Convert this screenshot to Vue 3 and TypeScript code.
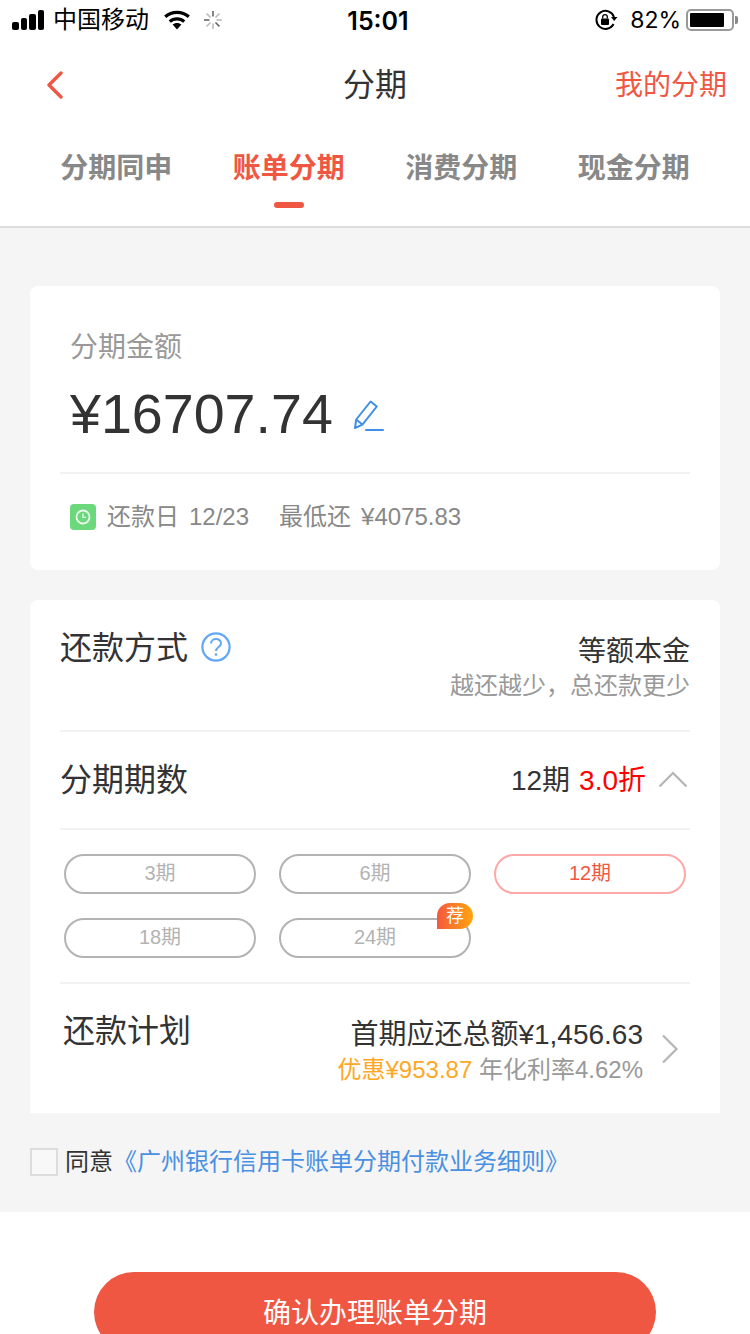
<template>
  <div class="page">
    <div class="status">
      <div class="status__left">
        <div class="signal">
          <i v-for="h in signalBars" :key="h" :style="{ height: h + 'px' }"></i>
        </div>
        <span class="carrier">中国移动</span>
        <svg class="wifi" width="28" height="20" viewBox="0 0 28 20">
          <path d="M14 19.5 L9.6 14.6 C12 12.4 16 12.4 18.4 14.6 Z" fill="#000" />
          <path d="M6.8 11.6 C10.8 7.9 17.2 7.9 21.2 11.6" fill="none" stroke="#000" stroke-width="3.2" />
          <path d="M2.2 6.8 C8.8 .9 19.2 .9 25.8 6.8" fill="none" stroke="#000" stroke-width="3.2" />
        </svg>
        <svg class="spinner" width="20" height="20" viewBox="0 0 20 20">
          <line v-for="(a, i) in spinnerAngles" :key="a" x1="10" y1="1" x2="10" y2="6.5"
            :stroke="i % 3 === 0 ? '#666' : '#bbb'" stroke-width="1.6" :transform="`rotate(${a} 10 10)`" />
        </svg>
      </div>
      <span class="time">15:01</span>
      <div class="status__right">
        <svg width="24" height="22" viewBox="0 0 24 22">
          <path d="M19.5 15 A9 9 0 1 1 20 8" fill="none" stroke="#000" stroke-width="2" />
          <path d="M17 8 L23.5 8 L20.2 12 Z" fill="#000" />
          <rect x="7" y="9.5" width="8" height="6.5" rx="1" fill="#000" />
          <path d="M8.7 9.5 V8 a2.3 2.3 0 0 1 4.6 0 V9.5" fill="none" stroke="#000" stroke-width="1.3" />
        </svg>
        <span class="battery-text">82%</span>
        <div class="battery"><div class="battery__fill"></div></div>
        <div class="battery-tip"></div>
      </div>
    </div>

    <div class="nav">
      <svg class="nav__back" width="18" height="28" viewBox="0 0 18 28">
        <path d="M15 2 L3 14 L15 26" fill="none" stroke="#ef5743" stroke-width="3.4" stroke-linecap="round" stroke-linejoin="round" />
      </svg>
      <span class="nav__title">分期</span>
      <span class="nav__link">我的分期</span>
    </div>

    <div class="tabs">
      <div v-for="t in tabs" :key="t" class="tab" :class="{ active: t === activeTab }">{{ t }}</div>
    </div>

    <div class="content">
      <div class="card amount">
        <div class="amount__label">分期金额</div>
        <div class="amount__value">
          <span>¥16707.74</span>
          <svg width="32" height="34" viewBox="0 0 32 34">
            <path d="M2 29 L3.2 20.5 L17.6 2.5 L23.8 7.5 L9.4 25.6 Z M3.2 20.5 L9.4 25.6" fill="none" stroke="#3f8fe8" stroke-width="2" stroke-linejoin="round" />
            <path d="M13 31 H30" stroke="#3f8fe8" stroke-width="2" stroke-linecap="round" />
          </svg>
        </div>
        <div class="amount__info">
          <div class="clock">
            <svg width="16" height="16" viewBox="0 0 16 16">
              <circle cx="8" cy="8" r="6.5" fill="none" stroke="#fff" stroke-opacity=".85" stroke-width="1.8" />
              <path d="M8 4.6 V8.4 H11" fill="none" stroke="#fff" stroke-opacity=".85" stroke-width="1.3" />
            </svg>
          </div>
          <span>还款日</span>
          <span class="info-val info-date">12/23</span>
          <span>最低还</span>
          <span class="info-val">¥4075.83</span>
        </div>
      </div>

      <div class="card method">
        <div class="row row--method">
          <div class="row__title">
            <span>还款方式</span>
            <svg width="30" height="30" viewBox="0 0 30 30">
              <circle cx="15" cy="15" r="13.6" fill="none" stroke="#62a9f5" stroke-width="2.2" />
              <path d="M10 11.6 C10 5.6 20 5.6 20 11.4 C20 15 15 15 15 19" fill="none" stroke="#62a9f5" stroke-width="2" />
              <circle cx="15" cy="22.6" r="1.3" fill="#62a9f5" />
            </svg>
          </div>
          <div class="method__side">
            <div class="method__name">等额本金</div>
            <div class="method__note">越还越少，总还款更少</div>
          </div>
        </div>
        <div class="row row--period">
          <span class="row__title">分期期数</span>
          <div class="period__side">
            <span>12期</span>
            <span class="period__rate">3.0折</span>
            <svg width="30" height="18" viewBox="0 0 30 18">
              <path d="M1.5 16.5 L15 3 L28.5 16.5" fill="none" stroke="#b5b5b5" stroke-width="2.2" />
            </svg>
          </div>
        </div>
        <div class="options">
          <div v-for="o in options" :key="o" class="option" :class="{ selected: o === selected }">
            {{ o }}
            <span v-if="o === recommended" class="option__badge">荐</span>
          </div>
        </div>
      </div>

      <div class="plan">
        <div class="plan__inner">
          <span class="row__title">还款计划</span>
          <div class="plan__side">
            <div class="plan__total">首期应还总额¥1,456.63</div>
            <div class="plan__note"><span class="plan__discount">优惠¥953.87</span> 年化利率4.62%</div>
          </div>
          <svg class="plan__arrow" width="18" height="30" viewBox="0 0 18 30">
            <path d="M2 1.5 L15.5 15 L2 28.5" fill="none" stroke="#b5b5b5" stroke-width="2.2" />
          </svg>
        </div>
      </div>

      <div class="agree">
        <div class="agree__box"></div>
        <span>同意</span>
        <span class="agree__link">《广州银行信用卡账单分期付款业务细则》</span>
      </div>
    </div>

    <div class="footer">
      <div class="submit">确认办理账单分期</div>
    </div>
  </div>
</template>

<script setup lang="ts">
const signalBars: number[] = [8, 12, 16, 20]
const spinnerAngles: number[] = [0, 45, 90, 135, 180, 225, 270, 315]
const tabs: string[] = ['分期同申', '账单分期', '消费分期', '现金分期']
const activeTab: string = '账单分期'
const options: string[] = ['3期', '6期', '12期', '18期', '24期']
const selected: string = '12期'
const recommended: string = '24期'
</script>

<style>
html, body {
  margin: 0;
  background: #fff;
}
</style>

<style scoped>
.page {
  width: 750px;
  height: 1334px;
  overflow: hidden;
  background: #fff;
  color: #333;
  font-family: "Liberation Sans", "Noto Sans CJK SC", sans-serif;
  display: flex;
  flex-direction: column;
}

.status {
  height: 40px;
  padding: 0 12px 0 12px;
  display: grid;
  grid-template-columns: 1fr auto 1fr;
  align-items: center;
  color: #000;
  flex-shrink: 0;
}
.status__left, .status__right {
  display: flex;
  align-items: center;
}
.status__right {
  justify-content: flex-end;
}
.signal {
  display: flex;
  align-items: flex-end;
  gap: 2px;
  width: 33px;
}
.signal i {
  width: 6.5px;
  border-radius: 2px;
  background: #000;
}
.carrier {
  margin-left: 8px;
  font-size: 24px;
  line-height: 40px;
}
.wifi {
  margin-left: 14px;
}
.spinner {
  margin-left: 12px;
}
.time {
  padding: 1px 0 0 6px;
  font-family: Inter, sans-serif;
  font-size: 25px;
  font-weight: 600;
}
.battery-text {
  margin-left: 12px;
  font-family: Inter, sans-serif;
  font-size: 23px;
}
.battery {
  margin-left: 5px;
  width: 48px;
  height: 22px;
  box-sizing: border-box;
  border: 2px solid #999;
  border-radius: 5px;
  padding: 2px;
}
.battery__fill {
  width: 34px;
  height: 14px;
  background: #000;
  border-radius: 1px;
}
.battery-tip {
  width: 3px;
  height: 8px;
  margin-left: 1px;
  background: #888;
  border-radius: 0 2px 2px 0;
}

.nav {
  position: relative;
  height: 84px;
  padding-bottom: 4px;
  display: flex;
  align-items: center;
  justify-content: center;
  flex-shrink: 0;
}
.nav__back {
  position: absolute;
  left: 46px;
  top: 31px;
}
.nav__title {
  font-size: 32px;
  color: #333;
}
.nav__link {
  position: absolute;
  right: 23px;
  top: 23px;
  font-size: 28px;
  color: #ef5743;
}

.tabs {
  height: 100px;
  box-sizing: border-box;
  padding: 0 30px;
  display: grid;
  grid-template-columns: repeat(4, 1fr);
  border-bottom: 2px solid #ddd;
  flex-shrink: 0;
}
.tab {
  position: relative;
  text-align: center;
  font-size: 28px;
  font-weight: 700;
  line-height: 82px;
  color: #888;
}
.tab.active {
  color: #ef5743;
}
.tab.active::after {
  content: "";
  position: absolute;
  left: 50%;
  top: 74px;
  width: 30px;
  height: 6px;
  margin-left: -15px;
  border-radius: 3px;
  background: #ef5743;
}

.content {
  height: 984px;
  box-sizing: border-box;
  padding: 58px 30px 0;
  background: #f5f5f5;
  flex-shrink: 0;
}
.card {
  background: #fff;
  border-radius: 8px;
}

.amount {
  height: 284px;
  box-sizing: border-box;
  padding: 0 30px;
}
.amount__label {
  padding: 44px 0 0 10px;
  font-size: 28px;
  line-height: 36px;
  color: #999;
}
.amount__value {
  display: flex;
  align-items: center;
  gap: 20px;
  height: 76px;
  margin-top: 10px;
  padding-left: 10px;
  font-size: 55.6px;
  line-height: 76px;
  color: #333;
}
.amount__value svg {
  margin-top: 4px;
}
.amount__info {
  margin-top: 20px;
  height: 86px;
  padding-left: 10px;
  border-top: 2px solid #f2f2f2;
  display: flex;
  align-items: center;
  font-size: 24px;
  line-height: 32px;
  color: #888;
}
.clock {
  width: 26px;
  height: 26px;
  margin-right: 11px;
  border-radius: 4px;
  background: #6cd87c;
  display: flex;
  align-items: center;
  justify-content: center;
}
.info-val {
  margin-left: 10px;
}
.info-date {
  margin-right: 30px;
}

.method {
  margin-top: 30px;
  height: 382px;
  padding: 0 30px;
  border-radius: 8px 8px 0 0;
}
.row {
  border-bottom: 2px solid #f2f2f2;
  display: flex;
  justify-content: space-between;
}
.row__title {
  display: flex;
  align-items: center;
  gap: 13px;
  font-size: 32px;
  line-height: 40px;
  color: #333;
}
.row--method {
  height: 132px;
  box-sizing: border-box;
  padding-top: 26px;
}
.row--method .row__title {
  height: 42px;
}
.row--method .row__title span {
  margin-top: 1px;
}
.method__side {
  text-align: right;
  padding-top: 8px;
}
.method__name {
  font-size: 28px;
  line-height: 36px;
  color: #333;
}
.method__note {
  font-size: 24px;
  line-height: 32px;
  color: #999;
}
.row--period {
  height: 98px;
  box-sizing: border-box;
  align-items: center;
}
.row--period .row__title {
  margin-top: -1px;
}
.period__side {
  display: flex;
  align-items: center;
  margin-top: -4px;
  font-size: 28px;
  color: #333;
}
.period__rate {
  margin-left: 9px;
  color: #f00;
}
.period__side svg {
  margin: 2px 2px 0 12px;
}
.options {
  padding: 24px 4px 0;
  display: grid;
  grid-template-columns: repeat(3, 192px);
  justify-content: space-between;
  row-gap: 24px;
}
.option {
  position: relative;
  height: 40px;
  box-sizing: border-box;
  border: 2px solid #b3b3b3;
  border-radius: 20px;
  text-align: center;
  font-size: 20px;
  line-height: 34px;
  color: #b3b3b3;
}
.option.selected {
  border-color: #ffa8a8;
  color: #ef5743;
}
.option__badge {
  position: absolute;
  right: -4px;
  top: -17px;
  width: 36px;
  height: 26px;
  border-radius: 13px 13px 13px 0;
  background: linear-gradient(90deg, #f5573c, #ffa60f);
  color: #fff;
  font-size: 18px;
  line-height: 26px;
}

.plan {
  height: 131px;
  padding: 0 30px;
  background: #fff;
}
.plan__inner {
  height: 131px;
  box-sizing: border-box;
  border-top: 2px solid #f2f2f2;
  display: flex;
  position: relative;
}
.plan__inner .row__title {
  height: 42px;
  margin: 26px 0 0 3px;
}
.plan__side {
  margin-left: auto;
  margin-right: 47px;
  padding-top: 33px;
  text-align: right;
}
.plan__total {
  font-size: 28px;
  line-height: 36px;
  color: #333;
}
.plan__note {
  font-size: 24px;
  line-height: 34px;
  color: #999;
}
.plan__discount {
  color: #ffa726;
}
.plan__arrow {
  position: absolute;
  right: 11px;
  top: 50px;
}

.agree {
  margin-top: 31px;
  display: flex;
  align-items: center;
  font-size: 24px;
  line-height: 36px;
  color: #333;
}
.agree__box {
  width: 28px;
  height: 28px;
  box-sizing: border-box;
  margin-right: 7px;
  border: 2px solid #ddd;
  background: #f8f8f8;
}
.agree__link {
  color: #4a90e2;
}

.footer {
  padding-top: 60px;
  display: flex;
  justify-content: center;
}
.submit {
  width: 562px;
  height: 80px;
  flex-shrink: 0;
  border-radius: 40px;
  background: #ef5743;
  color: #fff;
  font-size: 28px;
  line-height: 84px;
  text-align: center;
}
</style>
